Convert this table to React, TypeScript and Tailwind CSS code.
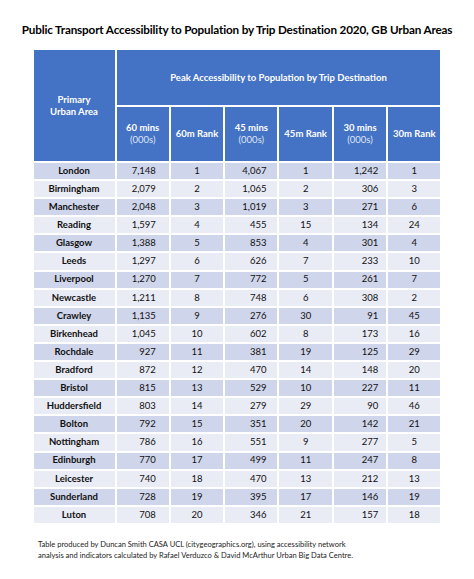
import React from "react";

type Row = {
  readonly area: string;
  readonly m60: string;
  readonly r60: number;
  readonly m45: string;
  readonly r45: number;
  readonly m30: string;
  readonly r30: number;
};

const rows: Row[] = [
  { area: "London", m60: "7,148", r60: 1, m45: "4,067", r45: 1, m30: "1,242", r30: 1 },
  { area: "Birmingham", m60: "2,079", r60: 2, m45: "1,065", r45: 2, m30: "306", r30: 3 },
  { area: "Manchester", m60: "2,048", r60: 3, m45: "1,019", r45: 3, m30: "271", r30: 6 },
  { area: "Reading", m60: "1,597", r60: 4, m45: "455", r45: 15, m30: "134", r30: 24 },
  { area: "Glasgow", m60: "1,388", r60: 5, m45: "853", r45: 4, m30: "301", r30: 4 },
  { area: "Leeds", m60: "1,297", r60: 6, m45: "626", r45: 7, m30: "233", r30: 10 },
  { area: "Liverpool", m60: "1,270", r60: 7, m45: "772", r45: 5, m30: "261", r30: 7 },
  { area: "Newcastle", m60: "1,211", r60: 8, m45: "748", r45: 6, m30: "308", r30: 2 },
  { area: "Crawley", m60: "1,135", r60: 9, m45: "276", r45: 30, m30: "91", r30: 45 },
  { area: "Birkenhead", m60: "1,045", r60: 10, m45: "602", r45: 8, m30: "173", r30: 16 },
  { area: "Rochdale", m60: "927", r60: 11, m45: "381", r45: 19, m30: "125", r30: 29 },
  { area: "Bradford", m60: "872", r60: 12, m45: "470", r45: 14, m30: "148", r30: 20 },
  { area: "Bristol", m60: "815", r60: 13, m45: "529", r45: 10, m30: "227", r30: 11 },
  { area: "Huddersfield", m60: "803", r60: 14, m45: "279", r45: 29, m30: "90", r30: 46 },
  { area: "Bolton", m60: "792", r60: 15, m45: "351", r45: 20, m30: "142", r30: 21 },
  { area: "Nottingham", m60: "786", r60: 16, m45: "551", r45: 9, m30: "277", r30: 5 },
  { area: "Edinburgh", m60: "770", r60: 17, m45: "499", r45: 11, m30: "247", r30: 8 },
  { area: "Leicester", m60: "740", r60: 18, m45: "470", r45: 13, m30: "212", r30: 13 },
  { area: "Sunderland", m60: "728", r60: 19, m45: "395", r45: 17, m30: "146", r30: 19 },
  { area: "Luton", m60: "708", r60: 20, m45: "346", r45: 21, m30: "157", r30: 18 },
];

const HeadCell = ({ top, bottom }: { readonly top: string; readonly bottom?: string }) => (
  <div className="flex h-[54px] flex-col items-center justify-center bg-[#4472c4] text-center leading-[12px] text-white">
    <span className="font-bold">{top}</span>
    {bottom && <span className="text-[#dfe6f5]">{bottom}</span>}
  </div>
);

export default function App() {
  return (
    <div className="h-[579px] w-[474px] bg-white text-[9.5px] text-[#111]" style={{ fontFamily: "Lato, 'Open Sans', sans-serif" }}>
      <h1 className="whitespace-nowrap pt-[21px] text-center text-[11.7px] font-bold leading-[16px] tracking-[-0.15px] text-black">
        Public Transport Accessibility to Population by Trip Destination 2020, GB Urban Areas
      </h1>

      <div className="mx-auto mt-[13px] grid w-[407px] grid-cols-[81px_repeat(6,minmax(0,1fr))] gap-[2px]">
        <div className="row-span-2 flex items-center justify-center bg-[#4472c4] text-center font-bold leading-[12px] text-white">
          Primary
          <br />
          Urban Area
        </div>
        <div className="col-span-6 flex h-[55px] items-center justify-center bg-[#4472c4] pt-[2px] font-bold text-white">
          Peak Accessibility to Population by Trip Destination
        </div>
        <HeadCell top="60 mins" bottom="(000s)" />
        <HeadCell top="60m Rank" />
        <HeadCell top="45 mins" bottom="(000s)" />
        <HeadCell top="45m Rank" />
        <HeadCell top="30 mins" bottom="(000s)" />
        <HeadCell top="30m Rank" />

        {rows.map((r, i) => {
          const bg = i % 2 === 0 ? "bg-[#cfd5ea]" : "bg-[#e9ebf5]";
          return (
            <React.Fragment key={r.area}>
              <div className={`${bg} flex h-[16.1px] items-center justify-center font-bold`}>{r.area}</div>
              <div className={`${bg} flex h-[16.1px] items-center justify-end pr-[13px]`}>{r.m60}</div>
              <div className={`${bg} flex h-[16.1px] items-center justify-center`}>{r.r60}</div>
              <div className={`${bg} flex h-[16.1px] items-center justify-end pr-[11px]`}>{r.m45}</div>
              <div className={`${bg} flex h-[16.1px] items-center justify-center`}>{r.r45}</div>
              <div className={`${bg} flex h-[16.1px] items-center justify-end pr-[8px]`}>{r.m30}</div>
              <div className={`${bg} flex h-[16.1px] items-center justify-center`}>{r.r30}</div>
            </React.Fragment>
          );
        })}
      </div>

      <p className="ml-[38px] mt-[16px] text-[7.55px] leading-[11px] text-[#222]">
        Table produced by Duncan Smith CASA UCL (citygeographics.org), using accessibility network
        <br />
        analysis and indicators calculated by Rafael Verduzco &amp; David McArthur Urban Big Data Centre.
      </p>
    </div>
  );
}
